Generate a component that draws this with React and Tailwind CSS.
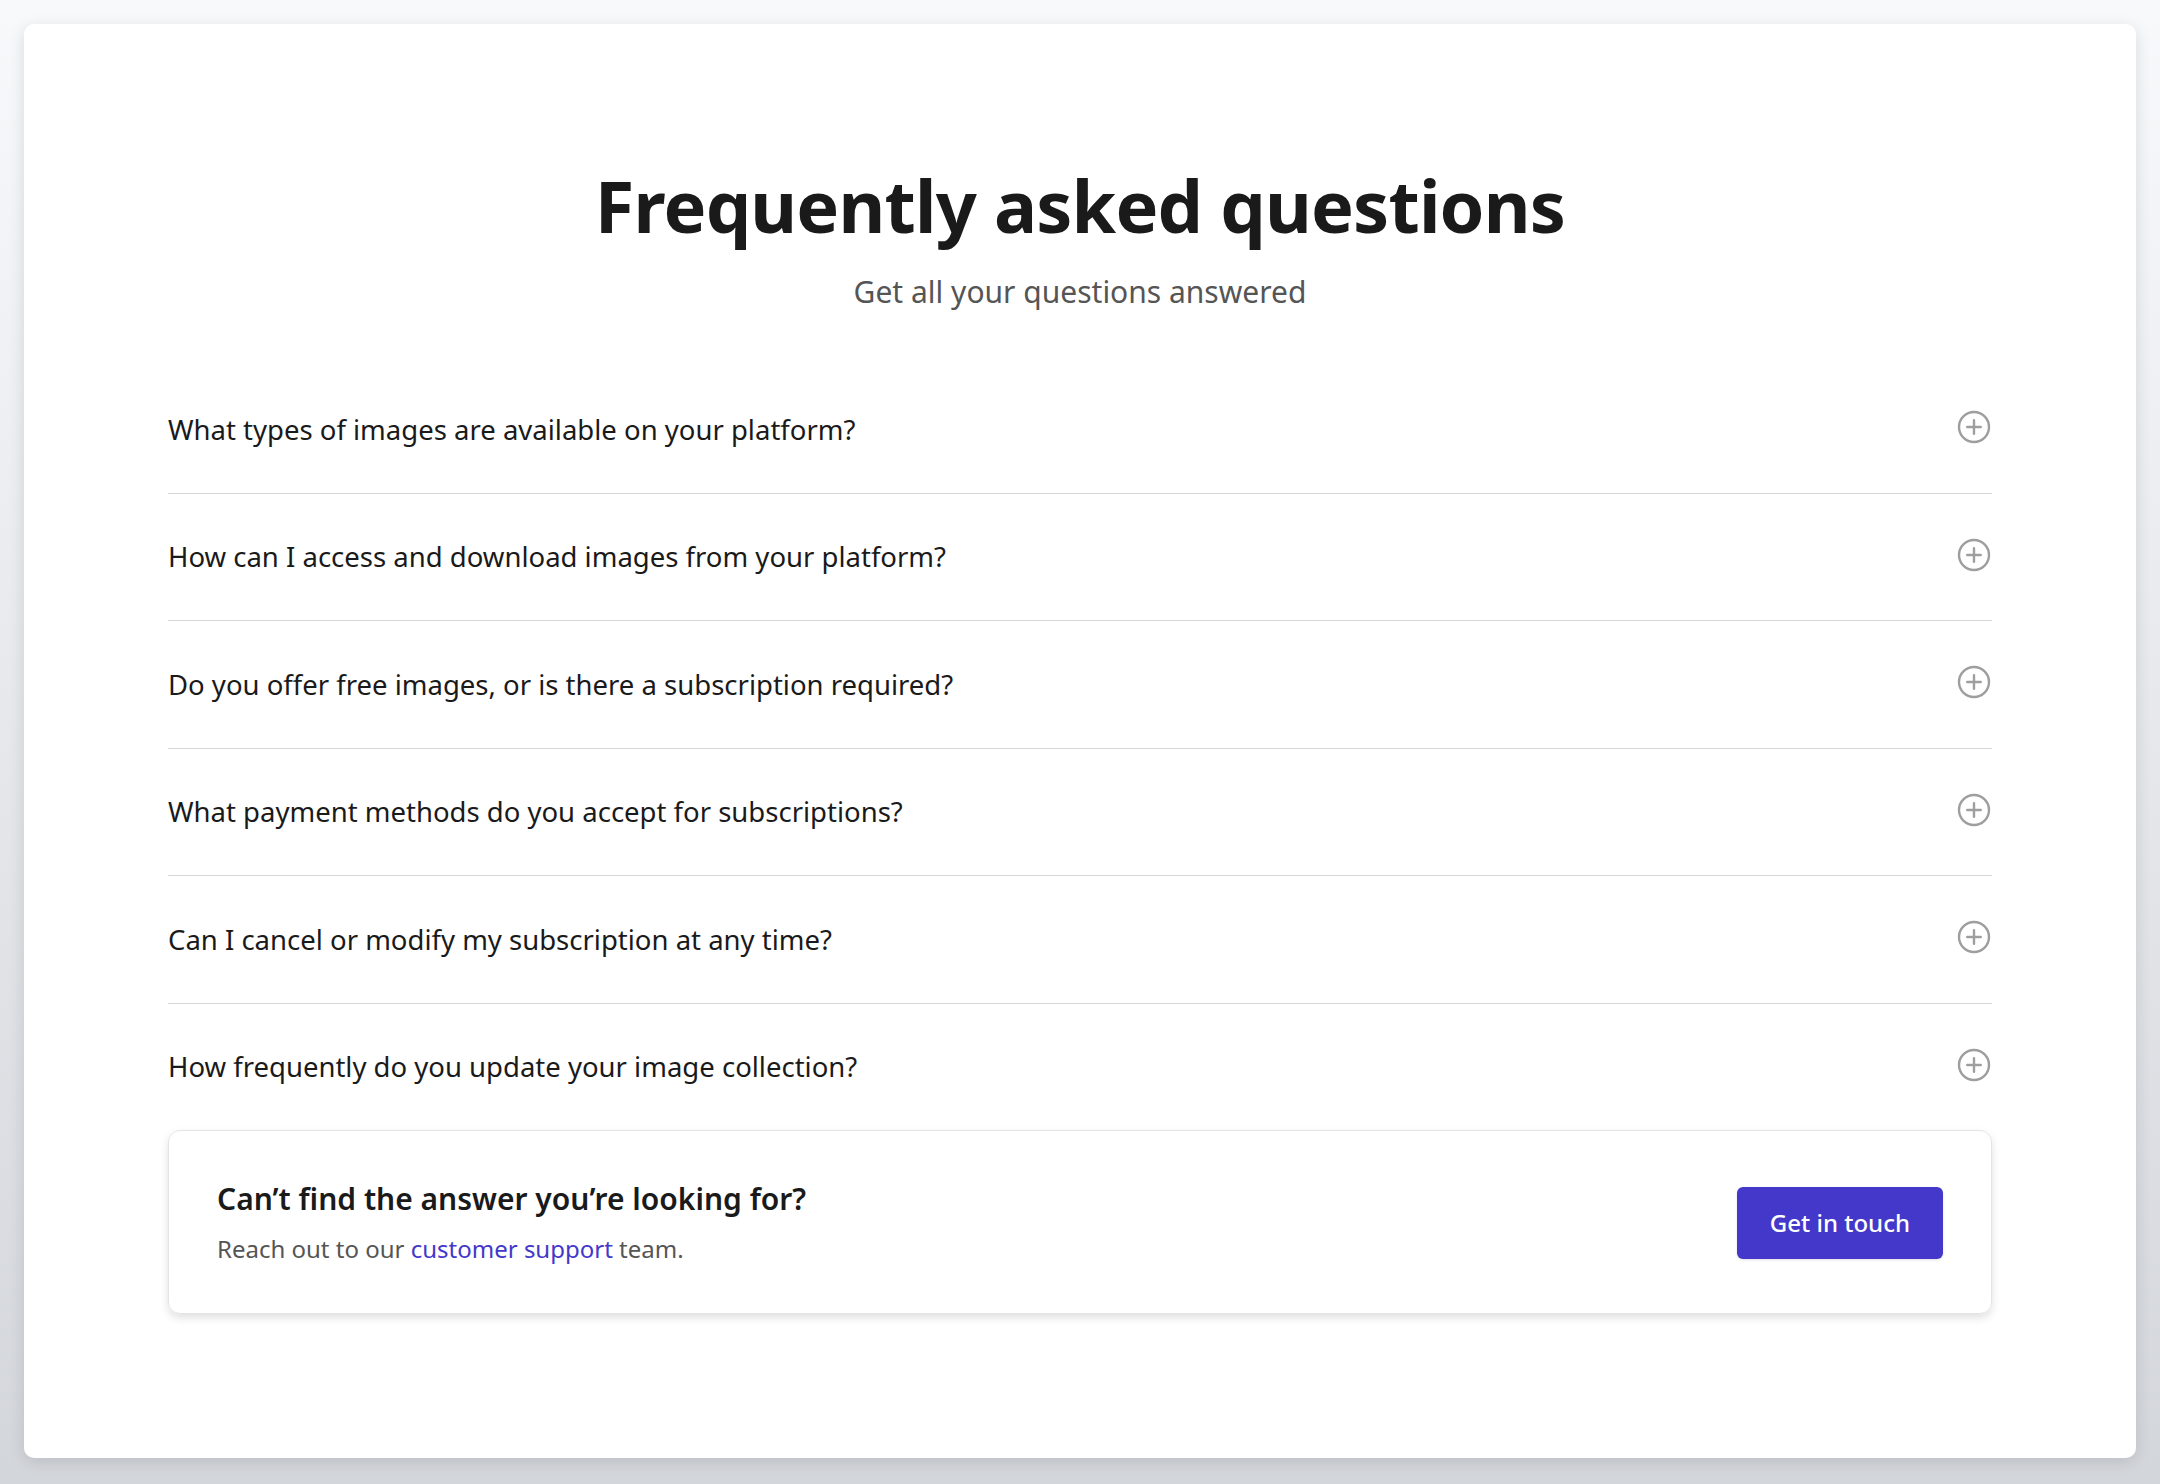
import React from "react";

const questions = [
  "What types of images are available on your platform?",
  "How can I access and download images from your platform?",
  "Do you offer free images, or is there a subscription required?",
  "What payment methods do you accept for subscriptions?",
  "Can I cancel or modify my subscription at any time?",
  "How frequently do you update your image collection?",
];

function PlusCircle() {
  return (
    <svg width="36" height="36" viewBox="0 0 24 24" fill="none" stroke="#9e9e9e" strokeWidth="1.6" strokeLinecap="round" strokeLinejoin="round">
      <circle cx="12" cy="12" r="10" />
      <path d="M12 7.5v9M7.5 12h9" />
    </svg>
  );
}

export default function App() {
  return (
    <div
      className="min-h-screen w-full p-6 bg-gradient-to-b from-[#f8f9fb] to-[#d3d6db]"
      style={{ fontFamily: '"Noto Sans", "Open Sans", sans-serif' }}
    >
      <div className="bg-white rounded-[10px] shadow-[0_4px_16px_rgba(0,0,0,0.12)] px-36 pt-[145px] pb-[144px]">
        <h1 className="text-center text-[72px] leading-[72px] font-bold text-[#1a1a1a] tracking-[-0.8px]">
          Frequently asked questions
        </h1>
        <p className="mt-[31px] text-center text-[30px] leading-[40px] text-[#555]">
          Get all your questions answered
        </p>
        <div className="mt-[54px]">
          {questions.map((q, i) => (
            <div
              key={i}
              className={
                "flex items-center justify-between py-[44.75px] " +
                (i < questions.length - 1 ? "border-b border-[#d6d6d6]" : "")
              }
            >
              <span className="text-[27.5px] leading-[37px] font-normal text-[#1a1a1a]">{q}</span>
              <span className="-mt-1">
                <PlusCircle />
              </span>
            </div>
          ))}
        </div>
        <div className="flex items-center justify-between rounded-xl border border-[#e4e4e4] shadow-[0_4px_8px_rgba(0,0,0,0.12)] px-12 pt-[49px] pb-12">
          <div>
            <h2 className="text-[30px] leading-[38px] font-semibold text-[#1a1a1a]">
              Can’t find the answer you’re looking for?
            </h2>
            <p className="mt-[15px] text-[24px] leading-[32px] text-[#555]">
              Reach out to our <a className="text-[#4338ca]">customer support</a> team.
            </p>
          </div>
          <button className="h-[72px] px-[33px] rounded-md bg-[#4338ca] text-white text-[24px] font-medium shadow-sm">
            Get in touch
          </button>
        </div>
      </div>
    </div>
  );
}
